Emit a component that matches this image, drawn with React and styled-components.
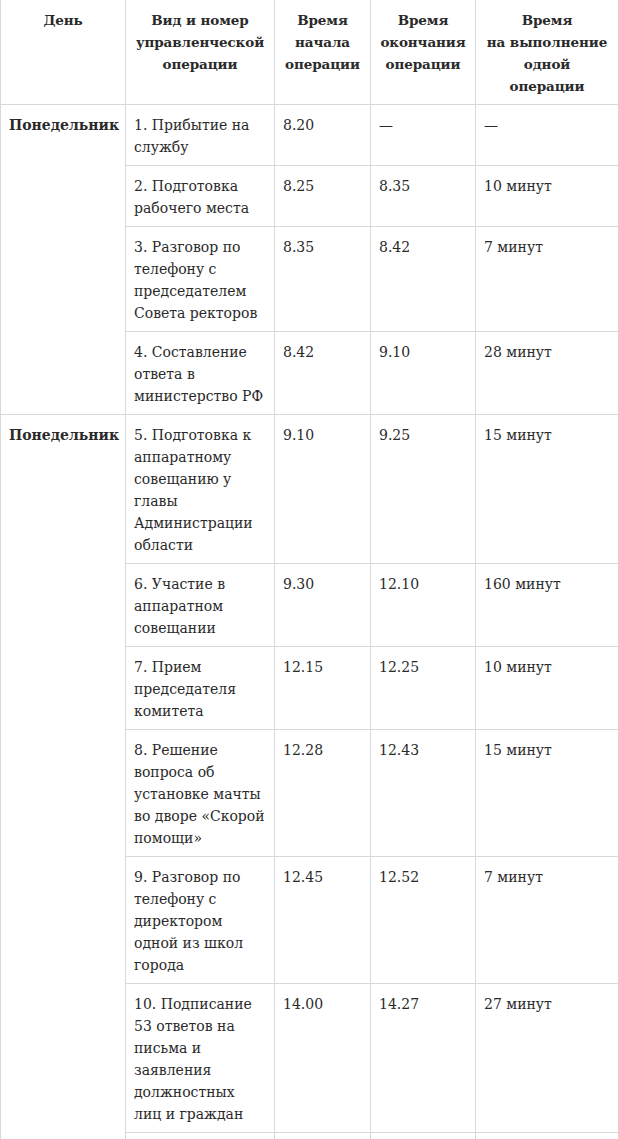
import styled, { createGlobalStyle } from 'styled-components';

const rows = [
    { day: 'Понедельник', span: 4, op: '1. Прибытие на службу', start: '8.20', end: '—', time: '—' },
    { op: '2. Подготовка рабочего места', start: '8.25', end: '8.35', time: '10 минут' },
    { op: '3. Разговор по телефону с председателем Совета ректоров', start: '8.35', end: '8.42', time: '7 минут' },
    { op: '4. Составление ответа в министерство РФ', start: '8.42', end: '9.10', time: '28 минут' },
    { day: 'Понедельник', span: 7, op: '5. Подготовка к аппаратному совещанию у главы Администрации области', start: '9.10', end: '9.25', time: '15 минут' },
    { op: '6. Участие в аппаратном совещании', start: '9.30', end: '12.10', time: '160 минут' },
    { op: '7. Прием председателя комитета', start: '12.15', end: '12.25', time: '10 минут' },
    { op: '8. Решение вопроса об установке мачты во дворе «Скорой помощи»', start: '12.28', end: '12.43', time: '15 минут' },
    { op: '9. Разговор по телефону с директором одной из школ города', start: '12.45', end: '12.52', time: '7 минут' },
    { op: '10. Подписание 53 ответов на письма и заявления должностных лиц и граждан', start: '14.00', end: '14.27', time: '27 минут' },
    { op: '', start: '', end: '', time: '' },
];

const App = () => {
    return (
        <>
            <GlobalStyle />
            <Table>
                <colgroup>
                    <col style={{ width: 125 }} />
                    <col style={{ width: 149 }} />
                    <col style={{ width: 96 }} />
                    <col style={{ width: 105 }} />
                    <col style={{ width: 143 }} />
                </colgroup>
                <thead>
                    <tr>
                        <HeadCell>День</HeadCell>
                        <HeadCell>Вид и номер<br />управленческой<br />операции</HeadCell>
                        <HeadCell>Время<br />начала<br />операции</HeadCell>
                        <HeadCell>Время<br />окончания<br />операции</HeadCell>
                        <HeadCell>Время<br />на выполнение<br />одной<br />операции</HeadCell>
                    </tr>
                </thead>
                <tbody>
                    {rows.map((r, i) => (
                        <tr key={i}>
                            {r.day && <DayCell rowSpan={r.span}>{r.day}</DayCell>}
                            <Cell $empty={!r.op}>{r.op}</Cell>
                            <Cell>{r.start}</Cell>
                            <Cell>{r.end}</Cell>
                            <Cell>{r.time}</Cell>
                        </tr>
                    ))}
                </tbody>
            </Table>
        </>
    );
};

const GlobalStyle = createGlobalStyle`
    html, body {
        margin: 0;
        padding: 0;
        background: #fff;
    }
    body {
        overflow: hidden;
    }
`;

const Table = styled.table`
    width: 618px;
    table-layout: fixed;
    border-collapse: collapse;
    font-family: "DejaVu Serif", serif;
    font-size: 14px;
    line-height: 22px;
    color: #2a2a2a;
`;

const HeadCell = styled.th`
    padding: 9px 4px 7px;
    border: 1px solid #d8d8d8;
    border-top: none;
    font-size: 13.5px;
    font-weight: bold;
    letter-spacing: -0.1px;
    white-space: nowrap;
    text-align: center;
    vertical-align: top;
`;

const Cell = styled.td`
    height: ${(p) => (p.$empty ? '60px' : 'auto')};
    padding: 9px 8px 7px;
    border: 1px solid #d8d8d8;
    text-align: left;
    vertical-align: top;
`;

const DayCell = styled(Cell)`
    font-weight: bold;
`;

export default App;
